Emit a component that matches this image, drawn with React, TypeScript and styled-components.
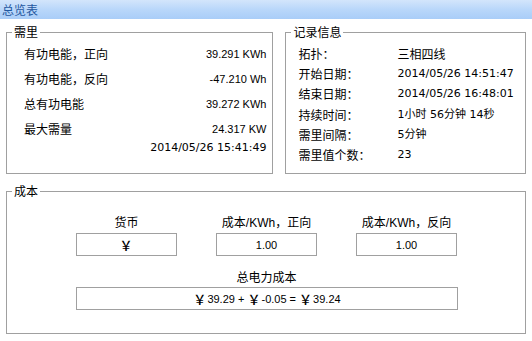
import React from "react";
import styled, { createGlobalStyle } from "styled-components";

const Global = createGlobalStyle`
  html, body { margin: 0; padding: 0; background: #ffffff; }
  body { width: 532px; height: 341px; overflow: hidden; font-family: "Noto Sans CJK SC", sans-serif; color: #000; }
`;

const CJK = `"Noto Sans CJK SC", sans-serif`;
const NUM = `"Liberation Sans", "Noto Sans CJK SC", sans-serif`;
const DATE = `"DejaVu Sans", "Noto Sans CJK SC", sans-serif`;

const Page = styled.div`
  width: 532px;
  height: 341px;
  display: flex;
  flex-direction: column;
  background: #fff;
`;

const TitleBar = styled.div`
  height: 19px;
  background: linear-gradient(to bottom, #d3e5fb 0%, #b9d7fa 50%, #a9cdf8 100%);
  display: flex;
  align-items: center;
  padding-left: 2px;
  font-family: ${CJK};
  font-size: 12px;
  line-height: 19px;
  color: #1f57a0;
`;

const Body = styled.div`
  display: flex;
  flex-direction: column;
  padding: 5px 6px 0 6px;
  gap: 9px;
`;

const TopRow = styled.div`
  display: flex;
  gap: 12px;
`;

const Group = styled.fieldset<{ $w: number; $h: number }>`
  margin: 0;
  width: ${(p) => p.$w}px;
  height: ${(p) => p.$h}px;
  box-sizing: border-box;
  border: 1px solid #a0a0a0;
  padding: 0;
  min-width: 0;
`;

const Legend = styled.legend`
  font-family: ${CJK};
  font-size: 12px;
  line-height: 16px;
  padding: 0 2px;
  margin-left: 5px;
  color: #000;
`;

const LeftList = styled.div`
  display: flex;
  flex-direction: column;
  padding: 1px 6px 0 17px;
`;

const LeftRow = styled.div<{ $h: number }>`
  height: ${(p) => p.$h}px;
  display: flex;
  align-items: center;
  justify-content: space-between;
`;

const Label = styled.span`
  font-family: ${CJK};
  font-size: 12px;
  line-height: 16px;
`;

const Num = styled.span`
  font-family: ${NUM};
  font-size: 11px;
  line-height: 16px;
`;

const DateText = styled.span`
  font-family: ${DATE};
  font-size: 11px;
  line-height: 16px;
  margin-left: auto;
`;

const InfoGrid = styled.div`
  display: grid;
  grid-template-columns: 99px 1fr;
  grid-auto-rows: 20.2px;
  align-items: center;
  padding: 4px 0 0 12px;
`;

const InfoValue = styled.span`
  font-family: ${DATE};
  font-size: 11px;
  line-height: 16px;
`;

const CostGrid = styled.div`
  display: grid;
  grid-template-columns: 101px 101px 101px;
  column-gap: 39px;
  padding: 15px 0 0 69px;
`;

const ColLabel = styled.div`
  font-family: ${NUM};
  font-size: 12px;
  line-height: 16px;
  text-align: center;
  height: 19px;
`;

const CjkPart = styled.span`
  font-family: ${CJK};
`;

const Yen = styled.span`
  font-family: ${CJK};
  font-size: 13px;
  font-weight: 500;
  margin-right: 1px;
`;

const Box = styled.div<{ $span?: boolean }>`
  grid-column: ${(p) => (p.$span ? "1 / span 3" : "auto")};
  width: ${(p) => (p.$span ? "382px" : "auto")};
  height: 23px;
  box-sizing: border-box;
  border: 1px solid #a0a0a0;
  display: flex;
  align-items: center;
  justify-content: center;
  font-family: ${NUM};
  font-size: 11px;
  white-space: pre;
  color: #000;
`;

const WideLabel = styled(ColLabel)`
  grid-column: 1 / span 3;
  margin-top: 13px;
  height: 18px;
`;

export default function App() {
  return (
    <Page>
      <Global />
      <TitleBar>总览表</TitleBar>
      <Body>
        <TopRow>
          <Group $w={268} $h={150}>
            <Legend>需里</Legend>
            <LeftList>
              <LeftRow $h={25}>
                <Label>有功电能，正向</Label>
                <Num>39.291 KWh</Num>
              </LeftRow>
              <LeftRow $h={25}>
                <Label>有功电能，反向</Label>
                <Num>-47.210 Wh</Num>
              </LeftRow>
              <LeftRow $h={25}>
                <Label>总有功电能</Label>
                <Num>39.272 KWh</Num>
              </LeftRow>
              <LeftRow $h={25}>
                <Label>最大需量</Label>
                <Num>24.317 KW</Num>
              </LeftRow>
              <LeftRow $h={14}>
                <DateText>2014/05/26 15:41:49</DateText>
              </LeftRow>
            </LeftList>
          </Group>
          <Group $w={241} $h={150}>
            <Legend>记录信息</Legend>
            <InfoGrid>
              <Label>拓扑：</Label>
              <Label>三相四线</Label>
              <Label>开始日期：</Label>
              <InfoValue>2014/05/26 14:51:47</InfoValue>
              <Label>结束日期：</Label>
              <InfoValue>2014/05/26 16:48:01</InfoValue>
              <Label>持续时间：</Label>
              <InfoValue>1小时 56分钟 14秒</InfoValue>
              <Label>需里间隔：</Label>
              <InfoValue>5分钟</InfoValue>
              <Label>需里值个数：</Label>
              <InfoValue>23</InfoValue>
            </InfoGrid>
          </Group>
        </TopRow>
        <Group $w={520} $h={151}>
          <Legend>成本</Legend>
          <CostGrid>
            <ColLabel><CjkPart>货币</CjkPart></ColLabel>
            <ColLabel><CjkPart>成本</CjkPart>/KWh<CjkPart>，正向</CjkPart></ColLabel>
            <ColLabel><CjkPart>成本</CjkPart>/KWh<CjkPart>，反向</CjkPart></ColLabel>
            <Box><Yen>￥</Yen></Box>
            <Box>1.00</Box>
            <Box>1.00</Box>
            <WideLabel><CjkPart>总电力成本</CjkPart></WideLabel>
            <Box $span>
              <Yen>￥</Yen>{"39.29 + "}<Yen>￥</Yen>{"-0.05 = "}<Yen>￥</Yen>{"39.24"}
            </Box>
          </CostGrid>
        </Group>
      </Body>
    </Page>
  );
}
